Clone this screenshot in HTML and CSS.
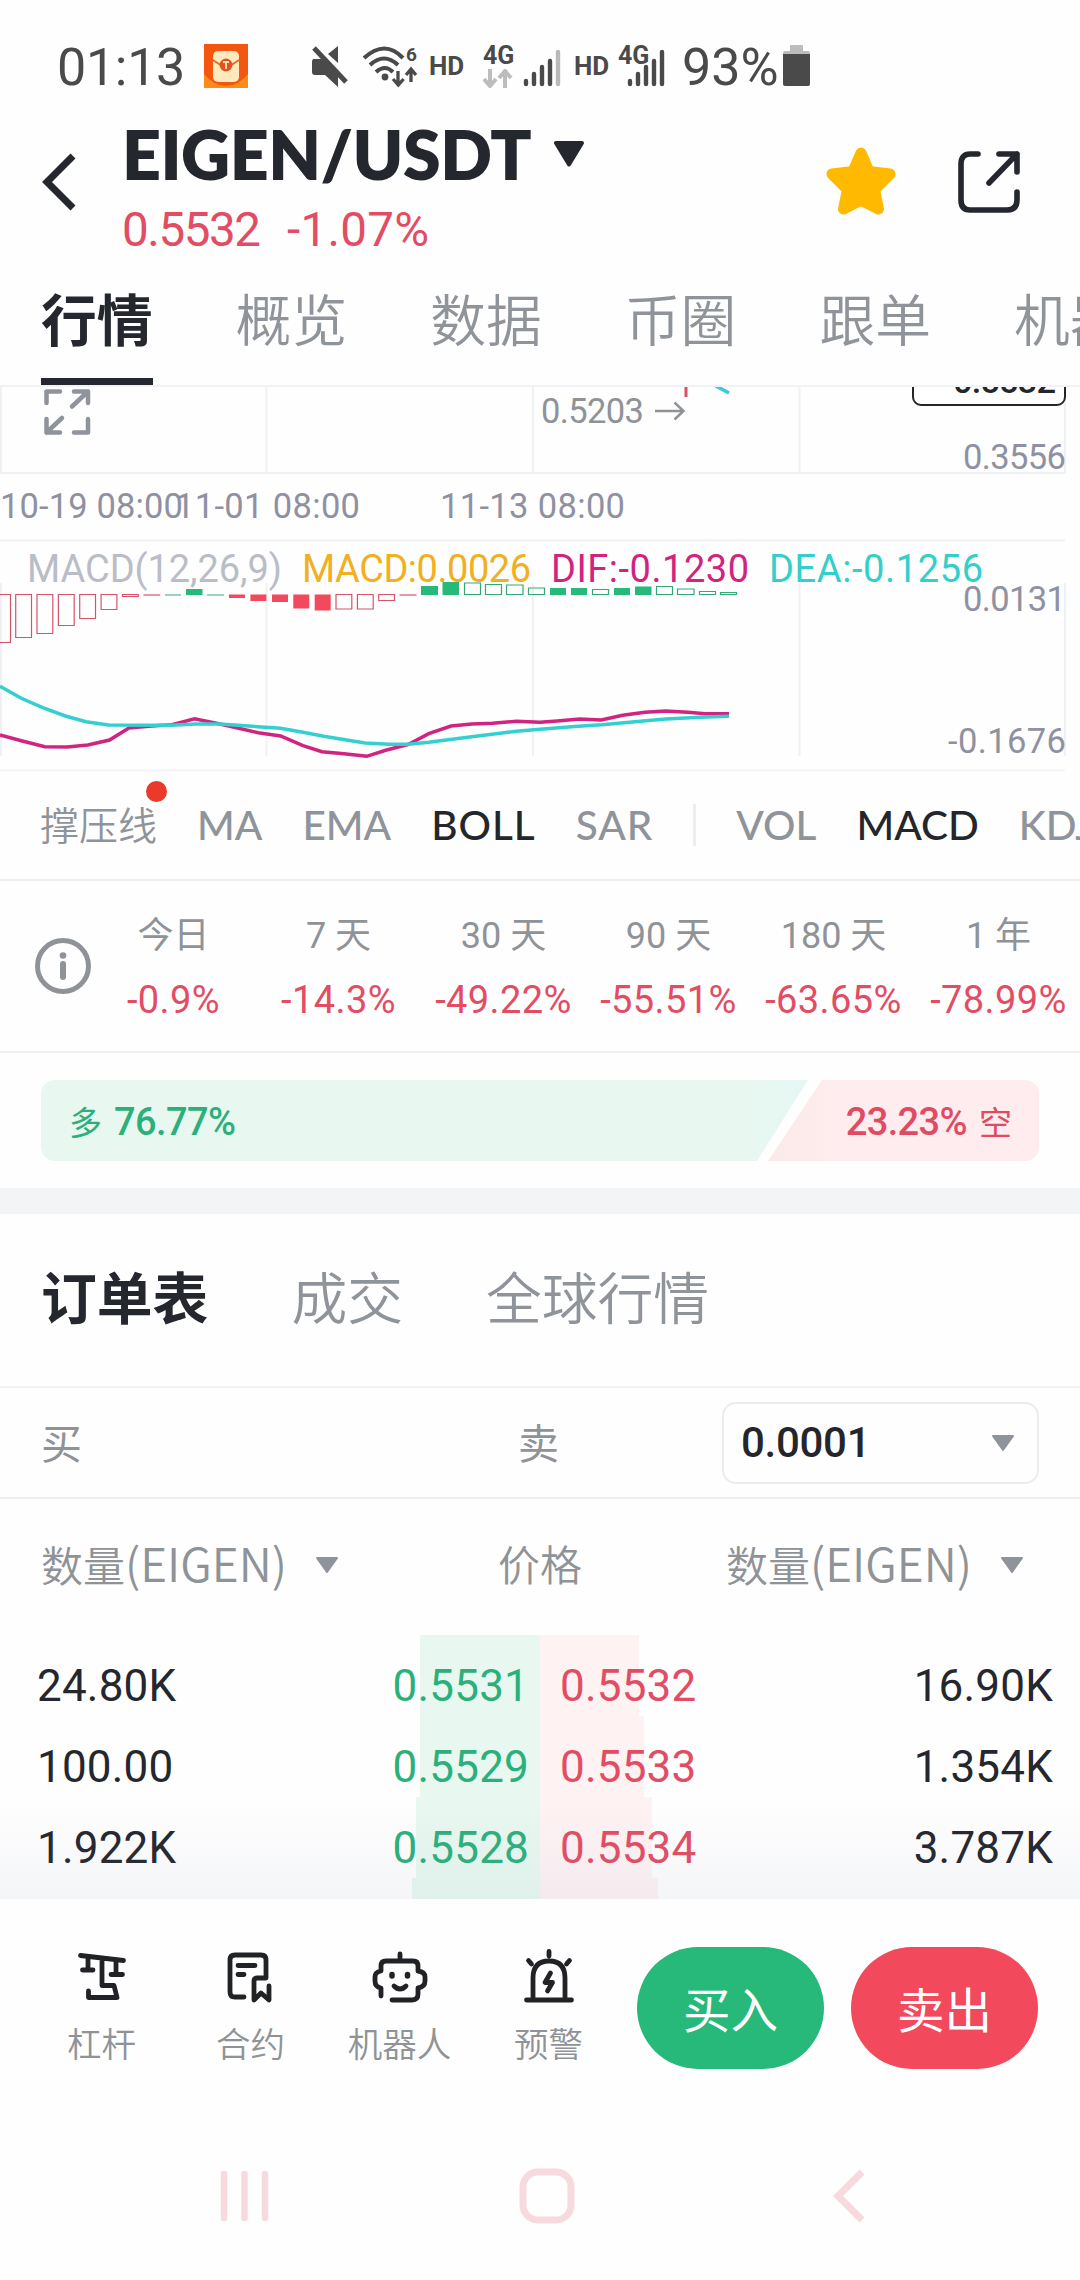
FILE: index.html
```html
<!DOCTYPE html>
<html lang="zh-CN">
<head>
<meta charset="utf-8">
<title>EIGEN/USDT</title>
<link rel="stylesheet" href="styles.css">
</head>
<body>
<div class="status">
  <span class="clock">01:13</span>
  <svg class="envelope" width="44" height="44" viewBox="0 0 44 44">
    <rect width="44" height="44" fill="#f2560f"/>
    <path d="M0 44V30q10 12 22 12t22-12v14z" fill="#ff8a1c"/>
    <rect x="9" y="7" width="26" height="31" rx="5" fill="#ffe9bd"/>
    <path d="M9 16l9 6q4 3 8 0l9-6" fill="none" stroke="#e8642a" stroke-width="1.6"/>
    <circle cx="22" cy="21" r="6.4" fill="#e2521c"/>
    <path d="M19 18h6M22 18v7" stroke="#ffe0b8" stroke-width="1.8"/>
  </svg>
  <svg class="mute" width="38" height="42" viewBox="0 0 38 42" fill="#4a4a4a">
    <path d="M17 8l10-8v17z"/>
    <path d="M3 2l32 34" stroke="#fff" stroke-width="9"/><path d="M2 13h9l16 17v11l-13-12H4q-3 0-3-3V15z"/>
    <path d="M3 2l32 34" stroke="#4a4a4a" stroke-width="5"/>
  </svg>
  <svg class="wifi" width="56" height="44" viewBox="0 0 56 44" fill="none" stroke="#4a4a4a" stroke-width="4">
    <path d="M2 13q21-19 39 0M8 20q14-13 28 0M14 27q9-8 17 0"/>
    <circle cx="23" cy="32" r="3.400" fill="#4a4a4a" stroke="none"/>
    <path d="M36 26v13M31 34l5.300 6 5.300-6" stroke-width="3.300"/><path d="M49 37V25M44 30l5-6 5 6" stroke-width="3.300"/>
    <text x="44" y="16" font-size="19" font-weight="700" fill="#4a4a4a" stroke="none">6</text>
  </svg>
  <span class="hd hd-first">HD</span>
  <span class="net net-first">4G
    <svg width="30" height="19" viewBox="0 0 30 19" fill="none" stroke="#bdbdbd" stroke-width="4"><path d="M7 0v15M1 10l6 7 6-7M22 19V4M16 9l6-7 6 7"/></svg>
  </span>
  <svg class="bars" width="38" height="38" viewBox="0 0 38 38" stroke="#4a4a4a" stroke-width="4.400" stroke-linecap="round"><path d="M3 32v3M11 25v10M19 18v17M27 12v23"/><path d="M35 3v32" stroke="#b9b9b9"/></svg>
  <span class="hd hd-second">HD</span>
  <span class="net net-second">4G</span>
  <svg class="bars bars-second" width="38" height="38" viewBox="0 0 38 38" stroke="#4a4a4a" stroke-width="4.400" stroke-linecap="round"><path d="M3 32v3M11 25v10M19 18v17M27 12v23M35 3v32"/></svg>
  <span class="level">93%</span>
  <svg class="battery" width="27" height="42" viewBox="0 0 27 42"><path d="M7 1q0-1 1-1h11q1 0 1 1v5h5q2 0 2 2v3H0V8q0-2 2-2h5z" fill="#bcbcbc"/><path d="M0 9h27v30q0 2-2 2H2q-2 0-2-2z" fill="#4a4a4a"/></svg>
</div>

<header class="pair">
  <svg class="back" width="36" height="60" viewBox="0 0 36 60" fill="none" stroke="#25272f" stroke-width="7"><path d="M32 4L6 30l26 26"/></svg>
  <div class="pair-info">
    <div class="pair-name"><span class="symbol">EIGEN/USDT</span><svg width="32" height="26" viewBox="0 0 32 26"><path d="M3 2h26L16 23.500z" fill="#25272f" stroke="#25272f" stroke-width="4" stroke-linejoin="round"/></svg></div>
    <div class="pair-price"><span class="price">0.5532</span><span class="change">-1.07%</span></div>
  </div>
  <svg class="star" width="72" height="70" viewBox="0 0 72 70"><path d="M36 7L44 25.500L65 28L49.500 43.500L53.500 63L36 54L18.500 63L22.500 43.500L7 28L28 25.500z" fill="#ffba00" stroke="#ffba00" stroke-width="11" stroke-linejoin="round"/></svg>
  <svg class="share" width="64" height="64" viewBox="0 0 64 64" fill="none" stroke="#25272f" stroke-width="5.600" stroke-linecap="round" stroke-linejoin="round"><path d="M21 4H13Q4 4 4 14V50Q4 60 13 60H50Q60 60 60 50V42M42 4H60V22M60 4L32 33"/></svg>
</header>

<nav class="tabs">
  <span class="tab active">行情</span><span class="tab">概览</span><span class="tab">数据</span><span class="tab">币圈</span><span class="tab">跟单</span><span class="tab">机器人</span>
</nav>

<svg class="chart" width="1080" height="384" viewBox="0 387 1080 384">
  <g class="grid">
    <path d="M1 387V473M266.500 387V473M533 387V473M799.500 387V473M1065 387V473M0 473H1065M0 540.500H1065M0 770.500H1065"/>
    <path d="M1 583V756M266.500 583V756M533 583V756M799.500 583V756M1065 583V756"/>
  </g>
  <path class="expand" d="M46.500 403V391.500H60M74 391.500H88V403M88 391.500L72 406.500M62 418L46.500 432.500M46.500 419V432.500H60M74 432.500H88V419"/>
  <text class="axis low" x="541" y="423" textLength="103">0.5203</text>
  <path class="arrow" d="M655 411H683M674.500 402.500L683.500 411L674.500 419.500"/>
  <path d="M686 387V397" stroke="#d8506a" stroke-width="3"/>
  <path d="M714 385L729 393" stroke="#34cfd0" stroke-width="3.500"/>
  <rect x="913" y="360" width="152" height="45" rx="8" fill="#fff" stroke="#25262b" stroke-width="2"/>
  <text class="axis tag" x="953" y="393" textLength="103">0.5532</text>
  <text class="axis" x="963" y="469" textLength="103">0.3556</text>
  <text class="axis" x="0" y="518" textLength="183">10-19 08:00</text>
  <text class="axis" x="175" y="518" textLength="185">11-01 08:00</text>
  <text class="axis" x="440" y="518" textLength="185">11-13 08:00</text>
  <text class="axis" x="963" y="611" textLength="103">0.0131</text>
  <text class="axis" x="948" y="753" textLength="118">-0.1676</text>
  <g class="bar-line down">
    <path d="M-5 594.500H10.500V642.500H-5z"/><path d="M15.700 594.500h15.800v43h-15.800z"/><path d="M37 594.500h15.800v39H37z"/><path d="M58.400 594.500h15.800v31H58.400z"/><path d="M79.700 594.500h15.800v24H79.700z"/><path d="M101.100 594.500h15.800v15h-15.800z"/><path d="M122.500 594.500h15.800v2h-15.800z"/><path d="M143.300 595h17"/>
    <path d="M336 594.500h15.800v14.500H336z"/><path d="M357.400 594.500h15.800v14.500h-15.800z"/><path d="M378.700 594.500h15.800v6h-15.800z"/><path d="M399.500 595h17"/>
  </g>
  <g fill="#f2495c"><path d="M229 594.500h16v3.500h-16zM250.400 594.500h16v6.500h-16zM272 594.500h16v7.500h-16zM293.300 594.500h16v14h-16zM314.700 594.500h16v16h-16z"/></g>
  <g fill="#27b97a"><path d="M186 589h16.500v6H186zM421 586h17v9h-17zM442.500 582h16.500v13h-16.500zM550 588h16v7h-16zM571 588h16v7h-16zM614 588h16v7h-16zM635 586.500h16.500v8.500H635z"/></g>
  <g class="bar-line up">
    <path d="M165 595h16M207 595h17"/>
    <path d="M464.500 583h16v11.500h-16zM485.500 584.500h16v10h-16zM506.500 585h16.500v9.500h-16.500zM528.500 588h16v6.500h-16zM592.500 589.500h16v5h-16zM656.500 586.500h16v8h-16zM677.500 589h16.500v5.500h-16.500zM699.500 591.500h16v3h-16zM720.500 592.500h16v2h-16z"/>
  </g>
  <polyline class="dif" points="0,735 21.300,740.700 44.800,746.700 67.200,747 87.800,745 109.500,740 129,728 151.500,726 172,724.700 194.600,718.700 220,724 237.600,728 258.300,732.700 280.600,736 303,745.700 322,751.700 344,753.700 366.700,756.300 385.700,750.300 408.700,744.300 428.700,733.700 451,726 471.800,724 492.400,723.300 516.500,721.300 540,722.300 557.200,721 579.600,719 601.300,720 622.600,715.300 645,712.300 665.700,711 688,712.300 705.300,713.700 729,713.700"/>
  <polyline class="dea" points="0,686.300 21.300,698.300 42.700,707.700 65.400,716 86,721.700 108.500,725 172,725.300 196,724 220,724 237.600,725.300 280.600,728.300 303,732.300 323.700,736.300 365,743 389,744.300 408,744.300 428.700,742.300 471.800,736.700 516.500,731.300 540,729.300 578,726.300 602,724.700 643.300,721 665.700,719 705.300,717 729,716.300"/>
  <g class="legend">
    <text x="27" y="581.500" textLength="255" fill="#babdc6">MACD(12,26,9)</text>
    <text x="302" y="581.500" textLength="229" fill="#f0b021">MACD:0.0026</text>
    <text x="551" y="581.500" textLength="198" fill="#d1247f">DIF:-0.1230</text>
    <text x="769" y="581.500" textLength="214" fill="#33cfcb">DEA:-0.1256</text>
  </g>
</svg>

<nav class="indicators">
  <span class="ind ind-cn">撑压线<i class="dot"></i></span><span class="ind">MA</span><span class="ind">EMA</span><span class="ind on wide">BOLL</span><span class="ind wide">SAR</span><i class="split"></i><span class="ind">VOL</span><span class="ind on">MACD</span><span class="ind">KDJ</span>
</nav>

<section class="stats">
  <svg class="info" width="56" height="56" viewBox="0 0 56 56" fill="none" stroke="#8f9397" stroke-linecap="round"><circle cx="28" cy="28" r="25.500" stroke-width="5"/><path d="M28 26v13" stroke-width="6"/><circle cx="28" cy="17.500" r="3.300" fill="#8f9397" stroke="none"/></svg>
  <div class="stat"><span>今日</span><b>-0.9%</b></div>
  <div class="stat"><span>7 天</span><b>-14.3%</b></div>
  <div class="stat"><span>30 天</span><b>-49.22%</b></div>
  <div class="stat"><span>90 天</span><b>-55.51%</b></div>
  <div class="stat"><span>180 天</span><b>-63.65%</b></div>
  <div class="stat"><span>1 年</span><b>-78.99%</b></div>
</section>

<section class="ratio">
  <div class="long"><span>多</span><b>76.77%</b></div>
  <div class="short"><b>23.23%</b><span>空</span></div>
</section>

<nav class="tabs book-tabs"><span class="tab active">订单表</span><span class="tab">成交</span><span class="tab">全球行情</span></nav>

<section class="sides">
  <span class="side">买</span><span class="side">卖</span>
  <div class="select"><span>0.0001</span><svg width="24" height="18" viewBox="0 0 24 18"><path d="M2 2h20L12 16z" fill="#8f939b" stroke="#8f939b" stroke-width="2" stroke-linejoin="round"/></svg></div>
</section>

<section class="columns">
  <div class="col"><span>数量<span class="unit">(EIGEN)</span></span><svg width="24" height="18" viewBox="0 0 24 18"><path d="M2 2h20L12 16z" fill="#8f939b" stroke="#8f939b" stroke-width="2" stroke-linejoin="round"/></svg></div>
  <div class="col"><span>价格</span></div>
  <div class="col"><span>数量<span class="unit">(EIGEN)</span></span><svg width="24" height="18" viewBox="0 0 24 18"><path d="M2 2h20L12 16z" fill="#8f939b" stroke="#8f939b" stroke-width="2" stroke-linejoin="round"/></svg></div>
</section>

<section class="book">
  <div class="row"><span class="qty">24.80K</span><span class="bid" style="--depth:120px">0.5531</span><span class="ask" style="--depth:99px">0.5532</span><span class="qty">16.90K</span></div>
  <div class="row"><span class="qty">100.00</span><span class="bid" style="--depth:120px">0.5529</span><span class="ask" style="--depth:104px">0.5533</span><span class="qty">1.354K</span></div>
  <div class="row"><span class="qty">1.922K</span><span class="bid" style="--depth:124px">0.5528</span><span class="ask" style="--depth:112px">0.5534</span><span class="qty">3.787K</span></div>
  <div class="row"><span class="qty"></span><span class="bid" style="--depth:128px"></span><span class="ask" style="--depth:118px"></span><span class="qty"></span></div>
</section>

<footer class="actions">
  <div class="tool">
    <svg width="56" height="56" viewBox="0 0 56 56"><path d="M6.500 8.500L49.500 13.500M14 10v12M8.500 23H19M42 14v13M37 27.500H48.500M28 12V38.500H40L43 50.500H14.500V44"/></svg>杠杆</div>
  <div class="tool">
    <svg width="56" height="56" viewBox="0 0 56 56"><path d="M21 50H12Q7 50 7 45V13Q7 8 12 8H38Q43 8 43 13V31H34Q31 31 31 34V53L38 46L46 53V39M15 18.500H32M15 27.500H21"/></svg>合约</div>
  <div class="tool">
    <svg width="56" height="56" viewBox="0 0 56 56"><path d="M28 14V7M9 49V41Q3 40 3 34V30Q3 25 9 24V19Q9 14 14 14H41Q46 14 46 19V24Q53 25 53 30V34Q53 40 46 41V47Q46 53 40 53H20M22 39Q28 45 34 39"/><path d="M20 27.500v1.500M35.500 27.500v1.500" stroke-width="5.500"/></svg>机器人</div>
  <div class="tool">
    <svg width="56" height="56" viewBox="0 0 56 56"><path d="M5.500 53H50.500M12 53V31Q12 14 28 14Q44 14 44 31V53M28 9V4.500M10.500 17L7.500 13.500M45.500 17L48.500 13.500M29.500 26L24 35.500H31.500L26.500 44"/></svg>预警</div>
  <button class="buy">买入</button>
  <button class="sell">卖出</button>
</footer>

<div class="sysnav">
  <svg class="recents" width="50" height="52" viewBox="0 0 50 52" stroke="#f6dade" stroke-width="6.500" stroke-linecap="round"><path d="M4 4v44M24.500 4v44M45 4v44"/></svg>
  <svg class="home" width="56" height="56" viewBox="0 0 56 56" fill="none" stroke="#f6dade" stroke-width="7"><rect x="4" y="4" width="48" height="48" rx="15"/></svg>
  <svg class="sysback" width="34" height="56" viewBox="0 0 34 56" fill="none" stroke="#f6dade" stroke-width="7"><path d="M30 4L6 28l24 24"/></svg>
</div>
</body>
</html>
```
FILE: styles.css
```css
* { box-sizing: border-box; }
body {
  margin: 0;
  width: 1080px;
  height: 2280px;
  overflow: hidden;
  background: #fefefe;
  color: #25272f;
  font-family: Roboto, "Noto Sans CJK SC", sans-serif;
}
svg { display: block; flex: none; }

.status { display: flex; align-items: flex-start; height: 120px; color: #4a4a4a; white-space: nowrap; }
.clock, .level { font-size: 52px; line-height: 60px; margin-top: 38px; }
.clock { width: 128px; margin-left: 57px; letter-spacing: -.3px; }
.envelope { margin: 44px 0 0 19px; }
.mute { margin: 46px 0 0 63px; }
.wifi { margin: 45px 0 0 13px; overflow: visible; }
.hd { font-size: 26px; font-weight: 700; line-height: 30px; margin-top: 51px; width: 34px; }
.hd-first { margin-left: 11px; }
.net { font-size: 25px; font-weight: 700; line-height: 24px; margin-top: 44px; width: 32px; }
.net svg { margin-top: 1px; }
.net-first { margin-left: 20px; }
.bars { margin: 49px 0 0 8px; }
.hd-second { margin-left: 13px; }
.net-second { margin-left: 10px; width: 31px; }
.bars-second { margin-left: -22px; }
.level { margin-left: 17px; width: 96px; }
.battery { margin: 45px 0 0 5px; }

.pair { display: flex; height: 150px; padding-left: 41px; }
.back { margin-top: 32px; }
.pair-info { width: 480px; margin-left: 45px; }
.pair-name { display: flex; align-items: center; height: 68px; }
.symbol { font: 800 68px/68px Lato, sans-serif; width: 410px; letter-spacing: -.5px; white-space: nowrap; }
.pair-name svg { margin: 0 0 0 21px; }
.pair-price { display: flex; color: #e24d64; font-size: 47.500px; line-height: 56px; margin-top: 14px; }
.price { width: 165px; letter-spacing: -1.400px; }
.change { letter-spacing: .3px; }
.star { margin: 26px 0 0 223px; }
.share { margin: 30px 0 0 60px; }

.tabs { display: flex; gap: 83px; height: 117px; padding-left: 41px; border-bottom: 2px solid #f1f2f5; overflow: hidden; white-space: nowrap; }
.tab { font-size: 55.800px; height: 115px; line-height: 94px; color: #8f939a; font-family: "Noto Sans CJK SC", sans-serif; font-weight: 350; flex: none; }
.tab.active { color: #25272f; font-weight: 700; border-bottom: 7px solid #25272f; }

.chart { height: 384px; }
.grid { fill: none; stroke: #f0f1f4; stroke-width: 2; }
.expand { fill: none; stroke: #8f939b; stroke-width: 4.500; stroke-linecap: round; stroke-linejoin: round; }
.arrow { fill: none; stroke: #8f9397; stroke-width: 2.500; }
.axis { font-size: 34.500px; fill: #8f91a0; }
.axis.low { fill: #8f9397; }
.axis.tag { fill: #25262b; font-weight: 500; }
.bar-line { fill: none; stroke-width: 1.200; }
.down { stroke: #d6536b; }
.up { stroke: #35a778; }
.dif, .dea { fill: none; stroke-width: 3.500; }
.dif { stroke: #d1237f; }
.dea { stroke: #34cfd0; }
.legend { font-size: 38px; }

.indicators { display: flex; align-items: center; height: 110px; padding-left: 40px; border-bottom: 2px solid #f0f0f2; overflow: hidden; white-space: nowrap; gap: 40px; }
.ind { position: relative; flex: none; color: #8f939a; font: 500 40.500px/50px Lato, sans-serif; }
.ind-cn { font: 350 39px/50px "Noto Sans CJK SC", sans-serif; padding-bottom: 4px; }
.ind.on { color: #25262b; }
.ind.wide { letter-spacing: 1px; }
.dot { position: absolute; left: 106px; top: -17px; width: 21px; height: 21px; border-radius: 50%; background: #e93a2c; }
.split { flex: none; width: 3px; height: 42px; background: #ededf0; }

.stats { display: flex; align-items: center; height: 172px; padding: 4px 0 0 35px; border-bottom: 2px solid #f0f0f2; }
.info { margin-bottom: 4px; }
.stat { width: 165px; flex: none; display: flex; flex-direction: column; align-items: center; gap: 16px; white-space: nowrap; }
.stat span { font-size: 36px; line-height: 48px; color: #8f9397; }
.stat b { font-size: 38px; line-height: 48px; font-weight: 400; letter-spacing: .4px; color: #e24d64; }

.ratio { display: flex; height: 161px; padding: 27px 41px 0; border-bottom: 26px solid #f3f4f6; }
.long, .short { display: flex; align-items: center; gap: 12px; height: 81px; padding-top: 2px; font-size: 38px; }
.long span, .short span { font-size: 33px; margin-top: -2px; }
.ratio b { font-weight: 500; letter-spacing: -.6px; }
.long { width: 767px; padding-left: 28px; border-radius: 14px 0 0 14px; color: #2cb07b; background: linear-gradient(90deg, #e8f8f0 92%, #e5f6f5); clip-path: polygon(0 0, 100% 0, 716px 100%, 0 100%); }
.short { width: 271px; margin-left: -40px; padding-right: 27px; justify-content: flex-end; border-radius: 0 14px 14px 0; color: #e04a62; background: linear-gradient(90deg, #fbeae9, #feecee 25%); clip-path: polygon(54px 0, 100% 0, 100% 100%, 0 100%); }

.book-tabs { height: 174px; padding-top: 34px; }
.book-tabs .tab.active { border-bottom: 0; }

.sides { display: grid; grid-template-columns: 477px 204px 317px; align-items: center; height: 111px; padding-left: 41px; border-bottom: 2px solid #eeeeef; color: #8f9397; font-size: 41px; }
.side { padding-bottom: 3px; }
.select { display: flex; align-items: center; justify-content: space-between; height: 82px; border: 2px solid #ebecee; border-radius: 14px; padding: 0 22px 0 17px; color: #25262b; font-size: 42px; font-weight: 500; letter-spacing: -.3px; }

.columns { display: grid; grid-template-columns: 457px 228px 1fr; align-items: center; height: 136px; padding: 0 0 5px 41px; color: #8f9397; font: 350 42px/60px "Noto Sans CJK SC", sans-serif; }
.col { display: flex; align-items: center; gap: 28px; white-space: nowrap; }
.col > span { padding-bottom: 4px; }
.unit { font-size: 46px; }

.book { position: relative; height: 264px; overflow: hidden; font-size: 44px; letter-spacing: .2px; }
.book::after { content: ""; position: absolute; inset: 170px 0 0; background: linear-gradient(rgba(120, 130, 170, 0), rgba(120, 130, 170, .07)); }
.row { display: grid; grid-template-columns: 270px 270px 270px 270px; height: 81px; line-height: 103px; }
.qty { padding: 0 27px 0 37px; }
.qty:last-child { text-align: right; }
.bid { color: #2cb07b; text-align: right; padding-right: 11px; background: linear-gradient(#e8f8f0, #e8f8f0) right / var(--depth) 100% no-repeat; }
.ask { color: #e24d64; padding-left: 20px; background: linear-gradient(#fef2f3, #fef2f3) left / var(--depth) 100% no-repeat; }

.actions { display: flex; height: 230px; padding: 48px 41px 0 27px; }
.tool { width: 149px; display: flex; flex-direction: column; align-items: center; gap: 17px; font-size: 34.500px; line-height: 50px; color: #8f9397; font-weight: 350; }
.tool svg { fill: none; stroke: #202226; stroke-width: 4.800; stroke-linecap: round; stroke-linejoin: round; }
button { flex: none; width: 187px; height: 122px; border: 0; border-radius: 61px; padding: 0; color: #fff; font: 400 47.500px/60px "Noto Sans CJK SC", sans-serif; }
.buy { background: #27b97a; margin-left: 14px; }
.sell { background: #f2495c; margin-left: 27px; }

.sysnav { display: flex; align-items: center; height: 134px; padding-left: 220px; }
.home { margin-left: 249px; }
.sysback { margin-left: 257px; }
```
